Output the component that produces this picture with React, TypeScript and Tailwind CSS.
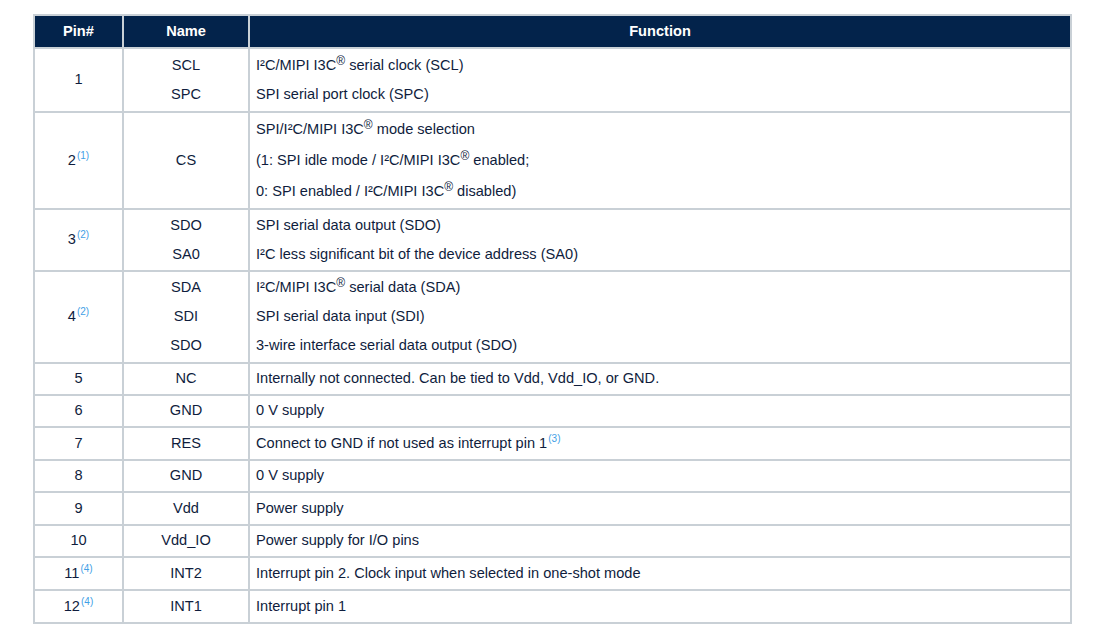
import React from "react";

const R = () => <sup className="text-[12px] relative -top-[5px]">®</sup>;
const Note = ({ n }: { n: number }) => (
  <sup className="text-[10px] text-[#3fa0e6] ml-[1px] relative -top-[6px]">({n})</sup>
);

type Row = {
  pin: React.ReactNode;
  names: string[];
  funcs: React.ReactNode[];
  h: number;
  lh: number;
};

const rows: Row[] = [
  {
    pin: "1",
    names: ["SCL", "SPC"],
    funcs: [
      <>I²C/MIPI I3C<R /> serial clock (SCL)</>,
      <>SPI serial port clock (SPC)</>,
    ],
    h: 64,
    lh: 29,
  },
  {
    pin: <>2<Note n={1} /></>,
    names: ["CS"],
    funcs: [
      <>SPI/I²C/MIPI I3C<R /> mode selection</>,
      <>(1: SPI idle mode / I²C/MIPI I3C<R /> enabled;</>,
      <>0: SPI enabled / I²C/MIPI I3C<R /> disabled)</>,
    ],
    h: 97,
    lh: 31,
  },
  {
    pin: <>3<Note n={2} /></>,
    names: ["SDO", "SA0"],
    funcs: [
      <>SPI serial data output (SDO)</>,
      <>I²C less significant bit of the device address (SA0)</>,
    ],
    h: 62,
    lh: 29,
  },
  {
    pin: <>4<Note n={2} /></>,
    names: ["SDA", "SDI", "SDO"],
    funcs: [
      <>I²C/MIPI I3C<R /> serial data (SDA)</>,
      <>SPI serial data input (SDI)</>,
      <>3-wire interface serial data output (SDO)</>,
    ],
    h: 92,
    lh: 29,
  },
  { pin: "5", names: ["NC"], funcs: [<>Internally not connected. Can be tied to Vdd, Vdd_IO, or GND.</>], h: 32, lh: 30 },
  { pin: "6", names: ["GND"], funcs: [<>0 V supply</>], h: 32, lh: 30 },
  { pin: "7", names: ["RES"], funcs: [<>Connect to GND if not used as interrupt pin 1<Note n={3} /></>], h: 33, lh: 30 },
  { pin: "8", names: ["GND"], funcs: [<>0 V supply</>], h: 32, lh: 30 },
  { pin: "9", names: ["Vdd"], funcs: [<>Power supply</>], h: 33, lh: 30 },
  { pin: "10", names: ["Vdd_IO"], funcs: [<>Power supply for I/O pins</>], h: 32, lh: 30 },
  { pin: <>11<Note n={4} /></>, names: ["INT2"], funcs: [<>Interrupt pin 2. Clock input when selected in one-shot mode</>], h: 33, lh: 30 },
  { pin: <>12<Note n={4} /></>, names: ["INT1"], funcs: [<>Interrupt pin 1</>], h: 33, lh: 30 },
];

export default function App() {
  return (
    <div
      className="w-[1107px] h-[630px] bg-white pt-[14px] pl-[33px]"
      style={{ fontFamily: '"Liberation Sans", Arial, sans-serif' }}
    >
      <table className="border-collapse w-[1039px] table-fixed text-[14.6px] text-[#0f1d3d]">
        <colgroup>
          <col className="w-[89px]" />
          <col className="w-[126px]" />
          <col />
        </colgroup>
        <thead>
          <tr className="h-[33px] bg-[#03234b] text-white font-bold">
            <th className="border-2 border-[#c9d0d6] font-bold text-center">Pin#</th>
            <th className="border-2 border-[#c9d0d6] font-bold text-center">Name</th>
            <th className="border-2 border-[#c9d0d6] font-bold text-center">Function</th>
          </tr>
        </thead>
        <tbody>
          {rows.map((r, i) => (
            <tr key={i} style={{ height: r.h }}>
              <td className="border-2 border-[#c9d0d6] text-center align-middle p-0">{r.pin}</td>
              <td className="border-2 border-[#c9d0d6] text-center align-middle p-0">
                <div className="flex flex-col justify-center">
                  {r.names.map((n, j) => (
                    <div key={j} className="flex items-center justify-center" style={{ height: r.lh }}>
                      {n}
                    </div>
                  ))}
                </div>
              </td>
              <td className="border-2 border-[#c9d0d6] align-middle p-0 pl-[6px]">
                <div className="flex flex-col justify-center">
                  {r.funcs.map((f, j) => (
                    <div key={j} className="flex items-center whitespace-pre" style={{ height: r.lh }}>
                      <span>{f}</span>
                    </div>
                  ))}
                </div>
              </td>
            </tr>
          ))}
        </tbody>
      </table>
    </div>
  );
}
